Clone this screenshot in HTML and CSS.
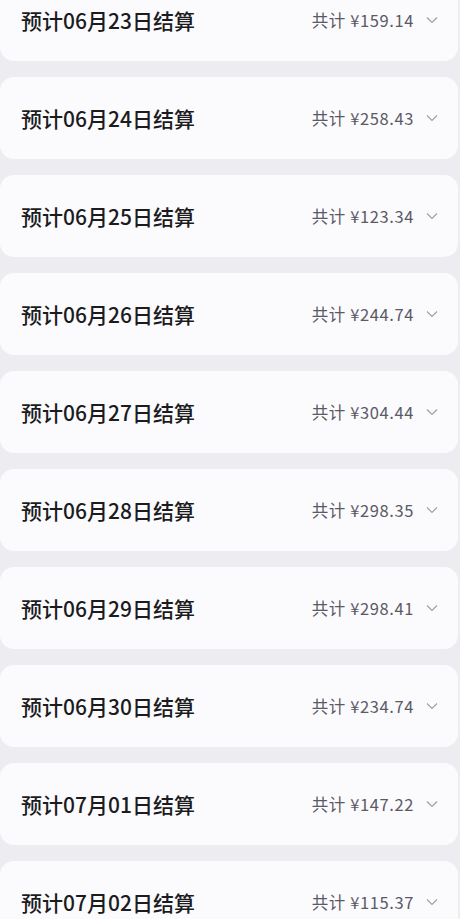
FILE: index.html
```html
<!DOCTYPE html>
<html lang="zh">
<head>
<meta charset="utf-8">
<link rel="stylesheet" href="styles.css">
</head>
<body>
<div class="list">
  <div class="card"><span class="title">预计06月23日结算</span><span class="sum">共计 ¥159.14</span><svg class="chev" viewBox="0 0 12 8"><path d="M1 1.5L6 6.5L11 1.5"/></svg></div>
  <div class="card"><span class="title">预计06月24日结算</span><span class="sum">共计 ¥258.43</span><svg class="chev" viewBox="0 0 12 8"><path d="M1 1.5L6 6.5L11 1.5"/></svg></div>
  <div class="card"><span class="title">预计06月25日结算</span><span class="sum">共计 ¥123.34</span><svg class="chev" viewBox="0 0 12 8"><path d="M1 1.5L6 6.5L11 1.5"/></svg></div>
  <div class="card"><span class="title">预计06月26日结算</span><span class="sum">共计 ¥244.74</span><svg class="chev" viewBox="0 0 12 8"><path d="M1 1.5L6 6.5L11 1.5"/></svg></div>
  <div class="card"><span class="title">预计06月27日结算</span><span class="sum">共计 ¥304.44</span><svg class="chev" viewBox="0 0 12 8"><path d="M1 1.5L6 6.5L11 1.5"/></svg></div>
  <div class="card"><span class="title">预计06月28日结算</span><span class="sum">共计 ¥298.35</span><svg class="chev" viewBox="0 0 12 8"><path d="M1 1.5L6 6.5L11 1.5"/></svg></div>
  <div class="card"><span class="title">预计06月29日结算</span><span class="sum">共计 ¥298.41</span><svg class="chev" viewBox="0 0 12 8"><path d="M1 1.5L6 6.5L11 1.5"/></svg></div>
  <div class="card"><span class="title">预计06月30日结算</span><span class="sum">共计 ¥234.74</span><svg class="chev" viewBox="0 0 12 8"><path d="M1 1.5L6 6.5L11 1.5"/></svg></div>
  <div class="card"><span class="title">预计07月01日结算</span><span class="sum">共计 ¥147.22</span><svg class="chev" viewBox="0 0 12 8"><path d="M1 1.5L6 6.5L11 1.5"/></svg></div>
  <div class="card"><span class="title">预计07月02日结算</span><span class="sum">共计 ¥115.37</span><svg class="chev" viewBox="0 0 12 8"><path d="M1 1.5L6 6.5L11 1.5"/></svg></div>
</div>
</body>
</html>
```
FILE: styles.css
```css
html, body {
  margin: 0;
  padding: 0;
  background: #ededf1;
  overflow: hidden;
}
body {
  width: 460px;
  height: 919px;
  font-family: "Noto Sans CJK SC", "Noto Sans", sans-serif;
}
.list {
  display: flex;
  flex-direction: column;
  gap: 16px;
  margin-top: -21px;
  padding: 0 2px 0 0;
}
.card {
  height: 82px;
  background: #fbfbfd;
  border-radius: 14px;
  display: flex;
  align-items: center;
  padding: 0 20px 0 21px;
  box-sizing: border-box;
}
.title {
  flex: 1;
  font-size: 21px;
  font-weight: 500;
  color: #1c1c1f;
  letter-spacing: 0;
}
.sum {
  font-size: 16.5px;
  font-weight: 400;
  color: #5c5966;
  letter-spacing: 0.6px;
  margin-right: 12px;
}
.chev {
  width: 12px;
  height: 8px;
  fill: none;
  stroke: #a09ea7;
  stroke-width: 1.2;
}
```
